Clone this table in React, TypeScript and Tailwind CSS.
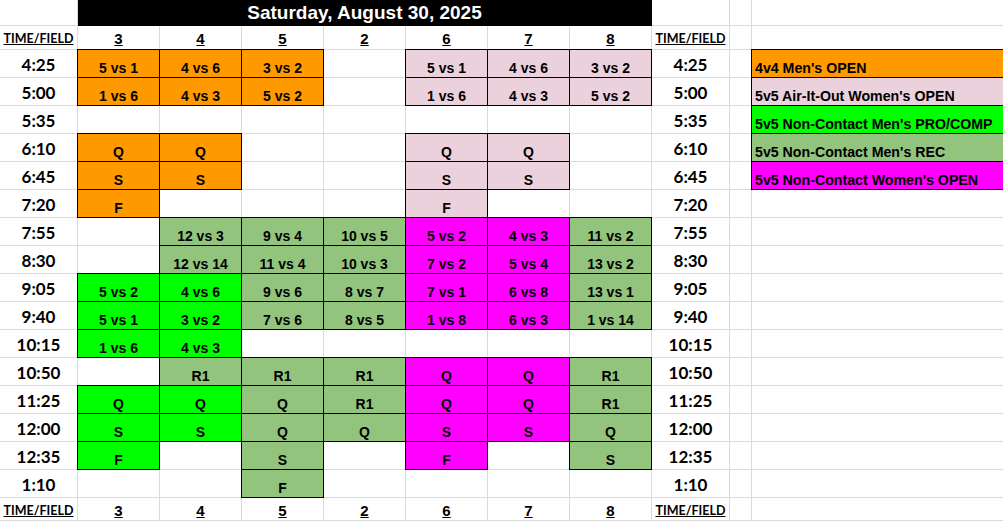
import React from 'react';

const arial = "font-['Liberation_Sans',Arial,sans-serif]";
const calibri = 'font-[Lato,sans-serif]';

const plain = 'border-r border-b border-[#dadada]';
const boxed = 'border-r border-b border-black shadow-[0_-1px_0_#000,-1px_0_0_#000,-1px_-1px_0_#000]';

const fill: Record<string, string> = {
  O: 'bg-[#ff9900]',
  P: 'bg-[#ead1dc]',
  G: 'bg-[#00ff00]',
  R: 'bg-[#93c47d]',
  M: 'bg-[#ff00ff]',
};

const fields = ['3', '4', '5', '2', '6', '7', '8'];

// each row: time, then one entry per field column ("color|text" or '')
const rows: [string, string[]][] = [
  ['4:25', ['O|5 vs 1', 'O|4 vs 6', 'O|3 vs 2', '', 'P|5 vs 1', 'P|4 vs 6', 'P|3 vs 2']],
  ['5:00', ['O|1 vs 6', 'O|4 vs 3', 'O|5 vs 2', '', 'P|1 vs 6', 'P|4 vs 3', 'P|5 vs 2']],
  ['5:35', ['', '', '', '', '', '', '']],
  ['6:10', ['O|Q', 'O|Q', '', '', 'P|Q', 'P|Q', '']],
  ['6:45', ['O|S', 'O|S', '', '', 'P|S', 'P|S', '']],
  ['7:20', ['O|F', '', '', '', 'P|F', '', '']],
  ['7:55', ['', 'R|12 vs 3', 'R|9 vs 4', 'R|10 vs 5', 'M|5 vs 2', 'M|4 vs 3', 'R|11 vs 2']],
  ['8:30', ['', 'R|12 vs 14', 'R|11 vs 4', 'R|10 vs 3', 'M|7 vs 2', 'M|5 vs 4', 'R|13 vs 2']],
  ['9:05', ['G|5 vs 2', 'G|4 vs 6', 'R|9 vs 6', 'R|8 vs 7', 'M|7 vs 1', 'M|6 vs 8', 'R|13 vs 1']],
  ['9:40', ['G|5 vs 1', 'G|3 vs 2', 'R|7 vs 6', 'R|8 vs 5', 'M|1 vs 8', 'M|6 vs 3', 'R|1 vs 14']],
  ['10:15', ['G|1 vs 6', 'G|4 vs 3', '', '', '', '', '']],
  ['10:50', ['', 'R|R1', 'R|R1', 'R|R1', 'M|Q', 'M|Q', 'R|R1']],
  ['11:25', ['G|Q', 'G|Q', 'R|Q', 'R|R1', 'M|Q', 'M|Q', 'R|R1']],
  ['12:00', ['G|S', 'G|S', 'R|Q', 'R|Q', 'M|S', 'M|S', 'R|Q']],
  ['12:35', ['G|F', '', 'R|S', '', 'M|F', '', 'R|S']],
  ['1:10', ['', '', 'R|F', '', '', '', '']],
];

const legend = [
  'O|4v4 Men\'s OPEN',
  'P|5v5 Air-It-Out Women\'s OPEN',
  'G|5v5 Non-Contact Men\'s PRO/COMP',
  'R|5v5 Non-Contact Men\'s REC',
  'M|5v5 Non-Contact Women\'s OPEN',
];

function Game({ v }: { v: string }) {
  if (!v) return <div className={plain} />;
  const [c, t] = v.split('|');
  return (
    <div className={`${fill[c]} ${boxed} ${arial} flex items-end justify-center pb-[1px] text-[14px] leading-4 font-bold text-black`}>
      {t}
    </div>
  );
}

function Time({ t }: { t: string }) {
  return (
    <div className={`${plain} ${calibri} flex items-end justify-center pb-[2px] text-[17px] leading-5 font-bold text-black`}>
      {t}
    </div>
  );
}

function FieldHeader({ footer }: { footer?: boolean }) {
  const label = `${plain} ${calibri} flex items-end justify-center ${footer ? 'pb-[1px]' : 'pb-[2px]'} text-[12.5px] leading-4 font-bold underline`;
  return (
    <>
      <div className={label}>TIME/FIELD</div>
      {fields.map(f => (
        <div key={f} className={`${plain} ${arial} flex items-end justify-center ${footer ? 'pb-0' : 'pb-[1px]'} text-[15px] leading-[18px] font-bold underline`}>
          {f}
        </div>
      ))}
      <div className={label}>TIME/FIELD</div>
      <div className={plain} />
      <div className={plain} />
    </>
  );
}

export default function App() {
  return (
    <div className="w-[1003px] h-[522px] overflow-hidden bg-white text-black">
      <div className="grid grid-cols-[78px_repeat(7,82px)_78px_22px_260px] grid-rows-[26px_24px_repeat(16,28px)_23px]">
        {/* title row */}
        <div className={plain} />
        <div className={`col-span-7 bg-black border-r border-b border-black ${arial} flex items-end justify-center pb-[1px] text-[19px] leading-[22px] font-bold text-white`}>
          Saturday, August 30, 2025
        </div>
        <div className={plain} />
        <div className={plain} />
        <div className={plain} />

        <FieldHeader />

        {rows.map(([time, games], i) => {
          const leg = legend[i];
          return (
            <React.Fragment key={time}>
              <Time t={time} />
              {games.map((g, j) => (
                <Game key={j} v={g} />
              ))}
              <Time t={time} />
              <div className={plain} />
              {leg ? (
                <div className={`${fill[leg.split('|')[0]]} ${boxed} ${arial} flex items-end pl-[3px] pb-[1px] text-[14.2px] leading-4 font-bold whitespace-nowrap`}>
                  {leg.split('|')[1]}
                </div>
              ) : (
                <div className={plain} />
              )}
            </React.Fragment>
          );
        })}

        <FieldHeader footer />
      </div>
    </div>
  );
}
